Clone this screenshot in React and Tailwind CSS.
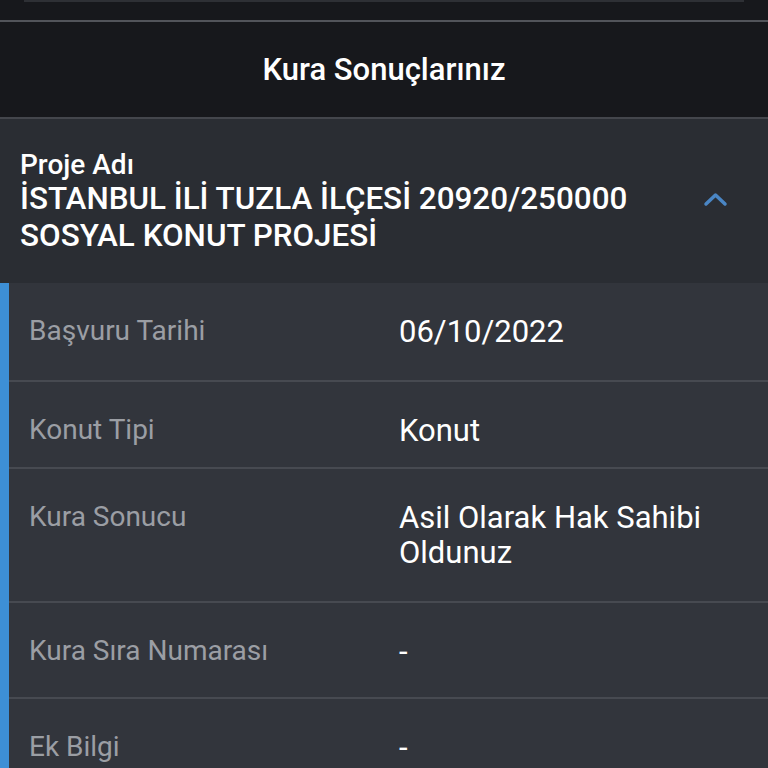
export default function App() {
  const rows = [
    { label: "Başvuru Tarihi", value: "06/10/2022", h: "h-[97px]" },
    { label: "Konut Tipi", value: "Konut", h: "h-[85px]" },
    { label: "Kura Sonucu", value: "Asil Olarak Hak Sahibi Oldunuz", h: "h-[132px]" },
    { label: "Kura Sıra Numarası", value: "-", h: "h-[94px]" },
    { label: "Ek Bilgi", value: "-", h: "h-[120px]" },
  ];
  return (
    <div
      className="w-[768px] h-[768px] overflow-hidden bg-[#17181c] flex flex-col"
      style={{ fontFamily: "Roboto, 'Noto Sans', sans-serif" }}
    >
      <div className="h-[20px] shrink-0">
        <div className="mx-[24px] h-[2px] bg-[#2e3035]" />
      </div>
      <div className="h-[2px] shrink-0 bg-[#52545a]" />
      <div className="h-[95px] shrink-0 flex items-center justify-center">
        <span className="text-white text-[31px] font-medium leading-none">Kura Sonuçlarınız</span>
      </div>
      <div className="h-[2px] shrink-0 bg-[#44464c]" />
      <div className="h-[164px] shrink-0 bg-[#2a2d33] flex items-center pl-[20px] pr-[40px]">
        <div className="flex-1 pt-[2px]">
          <div className="text-white text-[28px] font-medium leading-[30px]">Proje Adı</div>
          <div className="text-white text-[31.4px] font-medium leading-[37px] w-[640px]">
            İSTANBUL İLİ TUZLA İLÇESİ 20920/250000 SOSYAL KONUT PROJESİ
          </div>
        </div>
        <svg width="26" height="18" viewBox="0 0 26 18" className="shrink-0 mt-[-4px]">
          <path d="M4 14 L13.5 5 L23 14" fill="none" stroke="#4a86c5" strokeWidth="3.5" strokeLinecap="round" strokeLinejoin="round" />
        </svg>
      </div>
      <div className="flex flex-1 bg-[#32353c]">
        <div className="w-[9px] shrink-0 bg-[#3d8fd6]" />
        <div className="flex-1 flex flex-col">
          {rows.map((r, i) => (
            <div key={i} className="flex flex-col">
              {i > 0 && <div className="h-[2px] bg-[#474a51]" />}
              <div className={`${r.h} grid grid-cols-[370px_1fr] pl-[20px] pt-[30px]`}>
                <div className="text-[#9b9ea4] text-[28px] leading-[35px]">{r.label}</div>
                <div className="text-white text-[31px] leading-[35px] pt-[1px] pr-[40px]">{r.value}</div>
              </div>
            </div>
          ))}
        </div>
      </div>
    </div>
  );
}
